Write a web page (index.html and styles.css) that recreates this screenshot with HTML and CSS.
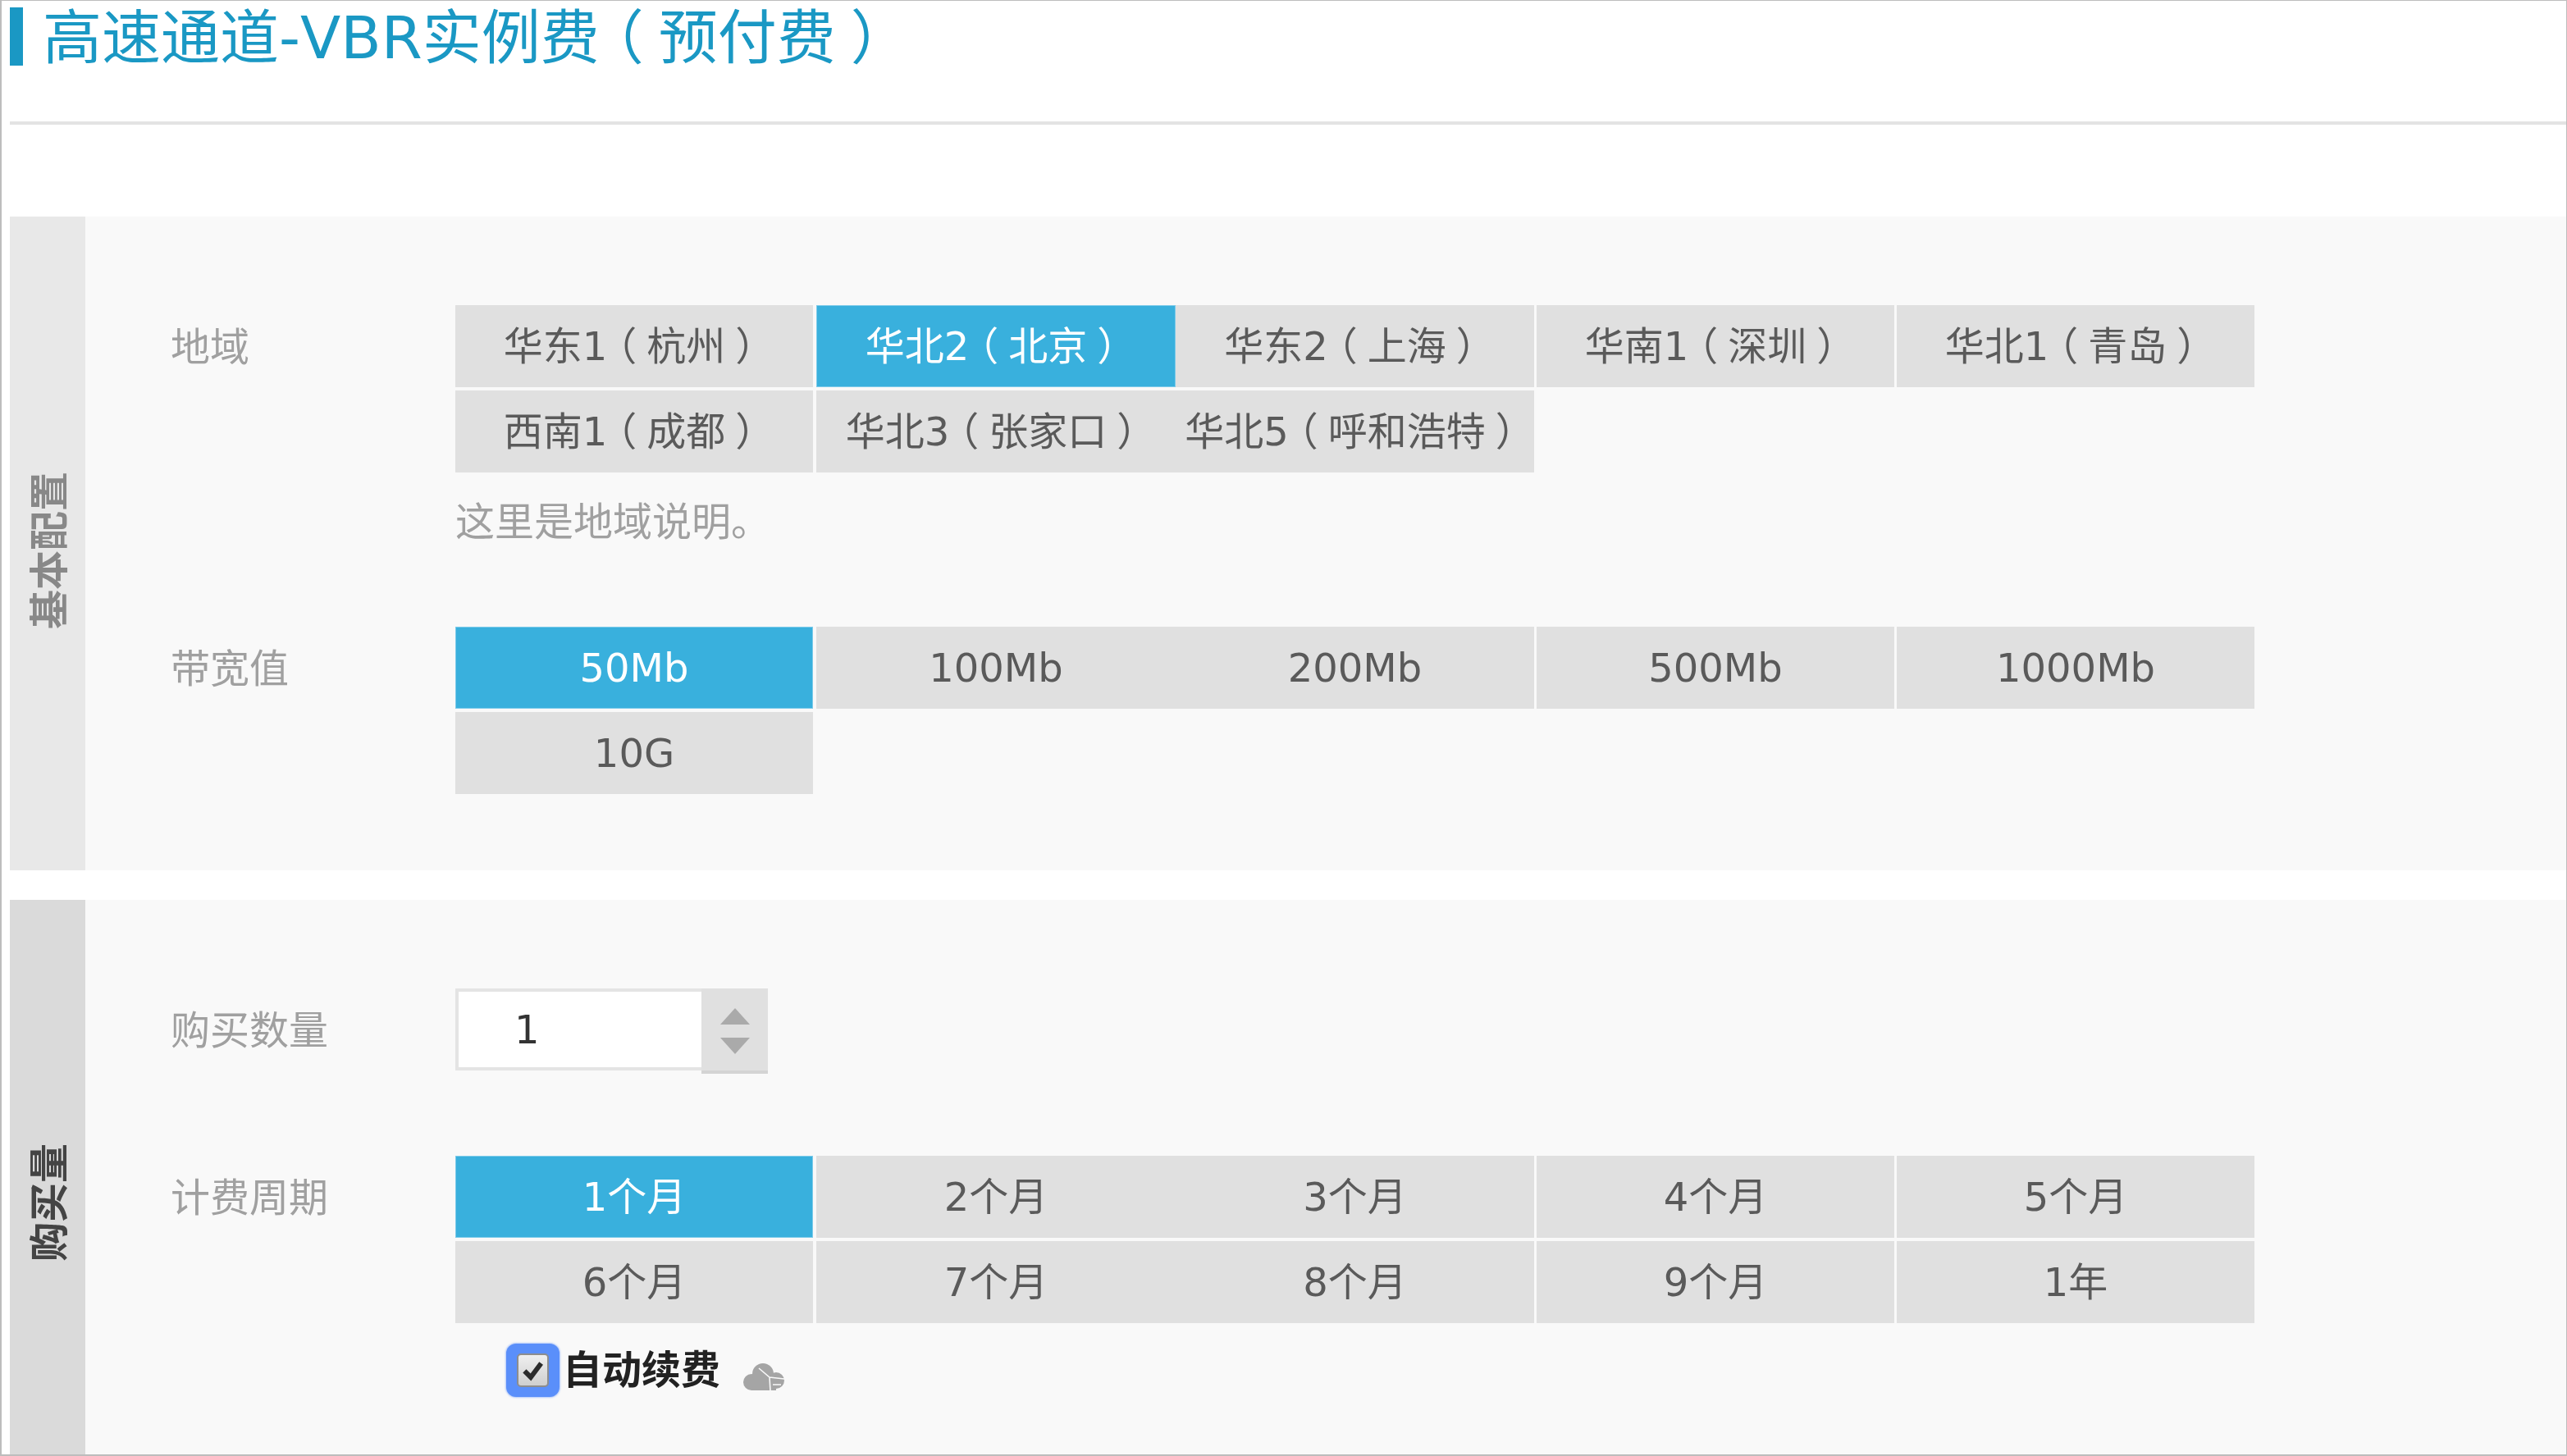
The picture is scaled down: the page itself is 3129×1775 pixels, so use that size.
FILE: index.html
```html
<!DOCTYPE html>
<html lang="zh-CN">
<head>
<meta charset="utf-8">
<title>高速通道-VBR实例费(预付费)</title>
<link rel="stylesheet" href="styles.css">
</head>
<body>
<div class="page">
  <header class="head">
    <span class="head-bar"></span>
    <h1 class="head-title">高速通道-VBR实例费<span class="pn">（</span>预付费<span class="pn">）</span></h1>
  </header>

  <section class="panel panel-basic">
    <div class="side side-basic"><span class="side-text">基本配置</span></div>
    <div class="body">
      <div class="row">
        <div class="row-label">地域</div>
        <div class="row-main">
          <div class="opts">
            <div class="opt">华东1<span class="pn">（</span>杭州<span class="pn">）</span></div>
            <div class="opt on">华北2<span class="pn">（</span>北京<span class="pn">）</span></div>
            <div class="opt">华东2<span class="pn">（</span>上海<span class="pn">）</span></div>
            <div class="opt">华南1<span class="pn">（</span>深圳<span class="pn">）</span></div>
            <div class="opt">华北1<span class="pn">（</span>青岛<span class="pn">）</span></div>
            <div class="opt">西南1<span class="pn">（</span>成都<span class="pn">）</span></div>
            <div class="opt">华北3<span class="pn">（</span>张家口<span class="pn">）</span></div>
            <div class="opt">华北5<span class="pn">（</span>呼和浩特<span class="pn">）</span></div>
          </div>
          <p class="desc">这里是地域说明。</p>
        </div>
      </div>
      <div class="row">
        <div class="row-label">带宽值</div>
        <div class="row-main">
          <div class="opts">
            <div class="opt on">50Mb</div>
            <div class="opt">100Mb</div>
            <div class="opt">200Mb</div>
            <div class="opt">500Mb</div>
            <div class="opt">1000Mb</div>
            <div class="opt">10G</div>
          </div>
        </div>
      </div>
    </div>
  </section>

  <section class="panel panel-buy">
    <div class="side side-buy"><span class="side-text">购买量</span></div>
    <div class="body">
      <div class="row row-qty">
        <div class="row-label">购买数量</div>
        <div class="stepper">
          <input class="stepper-input" type="text" value="1">
          <div class="stepper-btns">
            <span class="tri tri-up"></span>
            <span class="tri tri-down"></span>
          </div>
        </div>
      </div>
      <div class="row">
        <div class="row-label">计费周期</div>
        <div class="row-main">
          <div class="opts">
            <div class="opt on">1个月</div>
            <div class="opt">2个月</div>
            <div class="opt">3个月</div>
            <div class="opt">4个月</div>
            <div class="opt">5个月</div>
            <div class="opt">6个月</div>
            <div class="opt">7个月</div>
            <div class="opt">8个月</div>
            <div class="opt">9个月</div>
            <div class="opt">1年</div>
          </div>
          <div class="renew">
            <span class="check">
              <span class="check-box">
                <svg class="check-mark" viewBox="0 0 32 32"><path d="M4 17 L13 26 L28 6" fill="none" stroke="#2b2b2b" stroke-width="7"/></svg>
              </span>
            </span>
            <span class="renew-text">自动续费</span>
            <svg class="cloud" viewBox="0 0 50 34">
              <circle cx="10" cy="23" r="10" fill="#a5a5a5"/>
              <circle cx="24" cy="13" r="13" fill="#a5a5a5"/>
              <circle cx="40" cy="21" r="10" fill="#a5a5a5"/>
              <rect x="10" y="20" width="30" height="13" fill="#a5a5a5"/>
              <path d="M19 6 L32 17 L50 19 M32 17 L33 34 M36 26 L46 26" fill="none" stroke="#f9f9f9" stroke-width="1.6"/>
            </svg>
          </div>
        </div>
      </div>
    </div>
  </section>
</div>
</body>
</html>
```
FILE: styles.css
```css
* { box-sizing: border-box; }
html, body { margin: 0; padding: 0; background: #fff; }
body { font-family: "DejaVu Sans", "Noto Sans CJK SC", sans-serif; font-weight: 400; }

.pn { font-feature-settings: "halt"; padding: 0 0.25em; }

.page {
  width: 3129px;
  height: 1775px;
  overflow: hidden;
  border: 1px solid #bdbdbd;
  border-width: 1px 1px 2px 2px;
  background: #fff;
  filter: blur(0.6px);
}

.head {
  display: flex;
  align-items: flex-start;
  margin-left: 10px;
  height: 151px;
  padding-top: 8px;
  border-bottom: 4px solid #e3e3e3;
}
.head-bar { width: 16px; height: 71px; background: #1a98c4; flex: none; }
.head-title {
  margin: 0 0 0 24px;
  font-size: 72px;
  font-weight: 400;
  line-height: 74px;
  color: #1a98c4;
  white-space: nowrap;
}

.panel {
  display: flex;
  margin-left: 10px;
  background: #f9f9f9;
}
.panel-basic { margin-top: 112px; height: 797px; }
.panel-buy { margin-top: 36px; height: 738px; flex: none; }

.side {
  flex: none;
  width: 92px;
  display: flex;
  align-items: center;
  justify-content: center;
  padding-left: 4px;
}
.side-basic { background: #e8e8e8; color: #888; padding-top: 18px; }
.side-buy { background: #dadada; color: #444; }
.side-text {
  writing-mode: vertical-rl;
  text-orientation: sideways;
  transform: rotate(180deg);
  font-size: 48px;
  font-weight: 700;
  line-height: 56px;
}

.body { flex: 1; padding: 108px 0 0 104px; }

.row { display: flex; align-items: flex-start; }
.row-label {
  flex: none;
  width: 347px;
  font-size: 48px;
  line-height: 102px;
  color: #a0a0a0;
}
.row-main { flex: none; }
.row-qty { margin-bottom: 100px; }

.opts {
  display: grid;
  grid-template-columns: 440px 438px 440px 439px 436px;
  row-gap: 4px;
}
.opt {
  height: 100px;
  margin-right: 4px;
  background: #e0e0e0;
  color: #5a5a5a;
  font-size: 48px;
  line-height: 100px;
  text-align: center;
  white-space: nowrap;
}
.opt:nth-child(5n+2) { margin-right: 0; }
.opt:nth-child(5n+3) { margin-right: 3px; }
.opt:nth-child(5n+4) { margin-right: 3px; }
.opt:nth-child(5n) { margin-right: 0; }
.opt.on { background: #39b0dd; color: #fff; box-shadow: inset 0 0 0 1px #7ecbea; }

.desc {
  margin: 32px 0 100px;
  font-size: 48px;
  line-height: 56px;
  color: #a0a0a0;
}

.stepper { display: flex; align-items: flex-start; }
.stepper-input {
  display: block;
  width: 300px;
  height: 100px;
  margin: 0;
  padding: 0 0 0 68px;
  border: 4px solid #e4e4e4;
  border-right: 0;
  border-radius: 0;
  outline: 0;
  background: #fff;
  font-family: inherit;
  font-size: 48px;
  color: #333;
}
.stepper-btns {
  width: 81px;
  height: 104px;
  background: #e0e0e0;
  border-bottom: 4px solid #d4d4d4;
  display: flex;
  flex-direction: column;
  align-items: center;
  padding-top: 24px;
  gap: 16px;
}
.tri { width: 0; height: 0; border-left: 18px solid transparent; border-right: 18px solid transparent; }
.tri-up { border-bottom: 20px solid #aaa; }
.tri-down { border-top: 20px solid #aaa; }

.renew { display: flex; align-items: flex-start; margin: 25px 0 0 62px; height: 65px; }
.check {
  flex: none;
  width: 65px;
  height: 65px;
  padding: 12px 13px;
  background: #5a8ffa;
  border-radius: 12px;
  box-shadow: 0 0 2px 1px rgba(90, 143, 250, .45);
}
.check-box {
  display: block;
  width: 39px;
  height: 41px;
  padding: 4px;
  border: 2px solid #8d8d8d;
  border-radius: 5px;
  background: linear-gradient(#efefef, #cfcfcf);
}
.check-mark { display: block; width: 27px; height: 29px; }
.renew-text {
  margin-left: 4px;
  font-size: 48px;
  font-weight: 700;
  line-height: 65px;
  color: #222;
}
.cloud { width: 50px; height: 34px; margin: 24px 0 0 28px; flex: none; }
```
